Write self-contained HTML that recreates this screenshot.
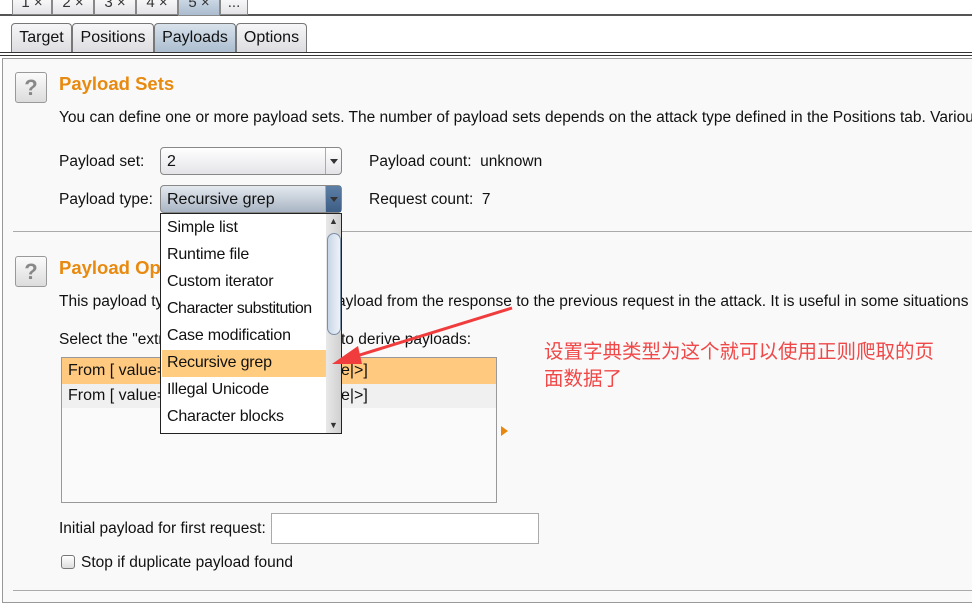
<!DOCTYPE html>
<html><head><style>
*{margin:0;padding:0;box-sizing:border-box}
body{width:972px;height:598px;overflow:hidden;background:#fff;font-family:"Liberation Sans","Noto Sans CJK SC",sans-serif;font-size:15.5px;color:#111;position:relative}
.a{position:absolute;white-space:nowrap}
.tt{position:absolute;top:-6px;height:21px;border:1px solid #888;border-top:none;background:linear-gradient(#fff,#e4e4e8);font-size:15px;text-align:center;color:#333}
.tb{position:absolute;top:23px;height:30px;border:1px solid #777;border-bottom:none;border-radius:4px 4px 0 0;background:linear-gradient(#f6f6f8,#dcdce0);font-size:16px;padding-top:5px;text-align:center;white-space:nowrap}
.sel{background:linear-gradient(#d8e2ec,#aabccf)}
.help{position:absolute;width:32px;height:31px;border:1px solid #999;border-radius:3px;background:linear-gradient(#fbfbfb,#dcdcdc);color:#888;font-weight:bold;font-size:22px;text-align:center;line-height:30px}
.h{position:absolute;color:#e88a0f;font-weight:bold;font-size:18.5px;white-space:nowrap}
.combo{position:absolute;height:28px;border:1px solid #888;border-radius:4px;background:linear-gradient(#fff,#e4e4e8);padding:5px 6px;font-size:16px}
.combo .ar{position:absolute;right:0;top:0;width:16px;height:26px;border-left:1px solid #aaa}
.combo .ar:after{content:"";position:absolute;left:4px;top:11px;border:4px solid transparent;border-top:5px solid #333}
.it{position:absolute;left:162px;width:164px;height:27px;padding:4px 5px;font-size:16px;white-space:nowrap;letter-spacing:-0.2px;overflow:hidden}
</style></head><body>
<div class="a" style="left:0;top:14px;width:972px;height:2px;background:#555"></div>
<div class="tt" style="left:12px;width:40px">1 ×</div>
<div class="tt" style="left:52px;width:42px">2 ×</div>
<div class="tt" style="left:94px;width:42px">3 ×</div>
<div class="tt" style="left:136px;width:42px">4 ×</div>
<div class="tt sel" style="left:178px;width:42px;height:22px">5 ×</div>
<div class="tt" style="left:220px;width:28px">...</div>
<div class="tb" style="left:11px;width:61px">Target</div>
<div class="tb" style="left:72px;width:82px">Positions</div>
<div class="tb sel" style="left:154px;width:82px">Payloads</div>
<div class="tb" style="left:236px;width:71px">Options</div>
<div class="a" style="left:0;top:52px;width:972px;height:1px;background:#333"></div>
<div class="a" style="left:0;top:55px;width:972px;height:1px;background:#333"></div>
<div class="a" style="left:2px;top:58px;width:980px;height:545px;border:1px solid #999;background:#f9f9f9"></div>

<div class="help" style="left:15px;top:72px">?</div>
<div class="h" style="left:59px;top:73px">Payload Sets</div>
<div class="a" style="left:59px;top:109px">You can define one or more payload sets. The number of payload sets depends on the attack type defined in the Positions tab. Various</div>
<div class="a" style="left:59px;top:153px">Payload set:</div>
<div class="combo" style="left:160px;top:147px;width:182px">2<span class="ar"></span></div>
<div class="a" style="left:369px;top:153px">Payload count:&nbsp; unknown</div>
<div class="a" style="left:59px;top:191px">Payload type:</div>
<div class="combo" style="left:160px;top:185px;width:182px;background:linear-gradient(#e4e9ef,#a9b5c4)">Recursive grep<span class="ar" style="background:linear-gradient(#5d7fa6,#3d5d85)"></span></div>
<div class="a" style="left:369px;top:191px">Request count:&nbsp; 7</div>
<div class="a" style="left:13px;top:231px;width:960px;height:1px;background:#aaa"></div>

<div class="help" style="left:15px;top:256px">?</div>
<div class="h" style="left:59px;top:257px">Payload Op<span style="margin-left:150px">ep]</span></div>
<div class="a" style="left:59px;top:293px">This payload ty</div>
<div class="a" style="left:337px;top:293px">ayload from the response to the previous request in the attack. It is useful in some situations w</div>
<div class="a" style="left:59px;top:331px">Select the "extr</div>
<div class="a" style="left:341px;top:331px">to derive payloads:</div>
<div class="a" style="left:61px;top:357px;width:436px;height:146px;border:1px solid #999;background:#fafafa"></div>
<div class="a" style="left:62px;top:358px;width:434px;height:26px;background:#ffc97f;padding:4px 6px;font-size:16px">From [ value=</div>
<div class="a" style="left:62px;top:384px;width:434px;height:24px;background:#f0f0f0;padding:3px 6px;font-size:16px">From [ value=</div>
<div class="a" style="left:341px;top:362px;font-size:16px">e|&gt;]</div>
<div class="a" style="left:341px;top:387px;font-size:16px">e|&gt;]</div>
<div class="a" style="left:501px;top:426px;border:5px solid transparent;border-left:7px solid #e8870e"></div>

<div class="a" style="left:160px;top:213px;width:182px;height:221px;border:1px solid #222;background:#fff"></div>
<div class="a" style="left:326px;top:214px;width:15px;height:219px;background:linear-gradient(90deg,#e8e8e8,#d0d0d0)"></div>
<div class="a" style="left:327px;top:233px;width:14px;height:102px;border:1px solid #7a8fa8;border-radius:7px;background:linear-gradient(90deg,#c9d6e6,#eef2f8)"></div>
<div class="a" style="left:329px;top:216px;font-size:9px;color:#333">▲</div>
<div class="a" style="left:329px;top:420px;font-size:9px;color:#333">▼</div>
<div class="it" style="top:215px">Simple list</div>
<div class="it" style="top:242px">Runtime file</div>
<div class="it" style="top:269px">Custom iterator</div>
<div class="it" style="top:296px;letter-spacing:-0.5px">Character substitution</div>
<div class="it" style="top:323px">Case modification</div>
<div class="it" style="top:350px;background:#ffcc80">Recursive grep</div>
<div class="it" style="top:377px">Illegal Unicode</div>
<div class="it" style="top:404px">Character blocks</div>

<svg class="a" style="left:320px;top:300px" width="200" height="80"><path d="M192 8 L30 58" stroke="#f03c3c" stroke-width="3" fill="none"/><polygon points="12,64 38,46 42,64" fill="#f03c3c"/></svg>
<div class="a" style="left:544px;top:339px;color:#f04848;font-size:19.5px;line-height:27px">设置字典类型为这个就可以使用正则爬取的页<br>面数据了</div>

<div class="a" style="left:59px;top:520px">Initial payload for first request:</div>
<div class="a" style="left:271px;top:513px;width:268px;height:31px;border:1px solid #aaa;background:#fff"></div>
<div class="a" style="left:61px;top:555px;width:14px;height:14px;border:1px solid #777;border-radius:3px;background:linear-gradient(#fff,#ddd)"></div>
<div class="a" style="left:81px;top:554px">Stop if duplicate payload found</div>
<div class="a" style="left:13px;top:590px;width:960px;height:1px;background:#aaa"></div>
</body></html>
